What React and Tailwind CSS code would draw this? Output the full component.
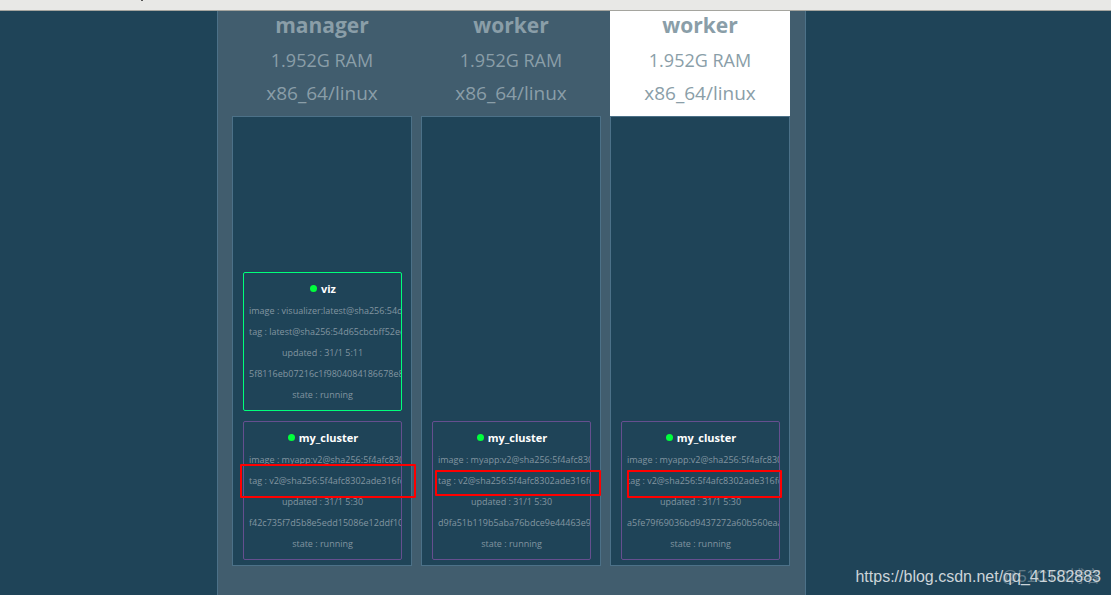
const NODES = [
  {
    id: "node-1",
    role: "manager",
    memory: "1.952G RAM",
    platform: "x86_64/linux",
    tasks: [
      {
        name: "viz",
        image: "visualizer:latest@sha256:54d65cbcbff52ee",
        tag: "latest@sha256:54d65cbcbff52ee7d789cd28",
        updated: "31/1 5:11",
        container: "5f8116eb07216c1f9804084186678e8b02c1f5",
        border: "border-[#00ff7b]",
      },
      {
        name: "my_cluster",
        image: "myapp:v2@sha256:5f4afc8302ade316fc",
        tag: "v2@sha256:5f4afc8302ade316fc47c99ee1d",
        updated: "31/1 5:30",
        container: "f42c735f7d5b8e5edd15086e12ddf10c5a7e2b",
        border: "border-[#654f8f]",
        mark: "-left-[3px] top-[43px] h-[34px] w-[176px]",
      },
    ],
  },
  {
    id: "node-2",
    role: "worker",
    memory: "1.952G RAM",
    platform: "x86_64/linux",
    tasks: [
      {
        name: "my_cluster",
        image: "myapp:v2@sha256:5f4afc8302ade316fc",
        tag: "v2@sha256:5f4afc8302ade316fc47c99ee1d",
        updated: "31/1 5:30",
        container: "d9fa51b119b5aba76bdce9e44463e9a1c07d4",
        border: "border-[#654f8f]",
        mark: "left-[3px] top-[49px] h-[26px] w-[166px]",
      },
    ],
  },
  {
    id: "node-3",
    role: "worker",
    memory: "1.952G RAM",
    platform: "x86_64/linux",
    active: true,
    tasks: [
      {
        name: "my_cluster",
        image: "myapp:v2@sha256:5f4afc8302ade316fc",
        tag: "v2@sha256:5f4afc8302ade316fc47c99ee1d",
        updated: "31/1 5:30",
        container: "a5fe79f69036bd9437272a60b560eaac41d8",
        border: "border-[#654f8f]",
        mark: "left-[6px] top-[49px] h-[28px] w-[155px]",
      },
    ],
  },
]

function TaskCard({ task }) {
  return (
    <li className="relative">
      <div
        className={`overflow-hidden rounded-xs border px-[5px] pt-1.5 pb-[5px] text-center text-[9px] leading-[21px] whitespace-nowrap text-[#8295a0] ${task.border}`}
      >
        <h3 className="flex items-center justify-center gap-1 pb-0.5 pl-px text-[11px] leading-[19px] font-bold text-white">
          <span className="size-[7px] rounded-full bg-[#00ff3c]" />
          {task.name}
        </h3>
        <p>image : {task.image}</p>
        <p>tag : {task.tag}</p>
        <p>updated : {task.updated}</p>
        <p>{task.container}</p>
        <p>state : running</p>
      </div>
      {/* Tag highlight, runs past the card edge */}
      {task.mark && (
        <div className={`absolute rounded-[1px] border-2 border-[#ff0000] ${task.mark}`} />
      )}
    </li>
  )
}

function NodeColumn({ node }) {
  return (
    <section className="w-[180px]">
      <header
        className={
          node.active
            ? "h-[105px] bg-white text-center text-[#8a9ea8]"
            : "h-[105px] text-center text-[#8a9ea8]"
        }
      >
        <h2 className="pb-1 text-[21px] leading-7 font-bold">{node.role}</h2>
        <p className="text-[18px] leading-[34px]">{node.memory}</p>
        <p className="text-[19px] leading-8">{node.platform}</p>
      </header>
      <ul className="flex min-h-[450px] flex-col justify-end gap-[10px] border border-[#4c7188] bg-[#1f4458] pt-[9px] pr-[9px] pb-[5px] pl-[10px]">
        {node.tasks.map((task) => (
          <TaskCard key={task.container} task={task} />
        ))}
      </ul>
    </section>
  )
}

export default function App() {
  return (
    <div className="relative flex min-h-screen flex-col bg-[#1f4458] font-['Open_Sans',sans-serif]">
      {/* Browser toolbar edge */}
      <div className="h-[11px] border-b border-[#a5a59f] bg-[#e8e8e6] pl-[141px]">
        <div className="h-px w-0.5 bg-[#555]" />
      </div>

      <main className="flex flex-1 pl-[217px]">
        <div className="flex gap-[9px] border-x border-[#4c7188] bg-[#415d6e] pr-[15px] pl-[14px]">
          {NODES.map((node) => (
            <NodeColumn key={node.id} node={node} />
          ))}
        </div>
      </main>

      {/* Watermarks */}
      <div className="absolute right-[10px] bottom-1.5 font-['Liberation_Sans','Noto_Sans_CJK_SC',sans-serif] text-[16px] leading-6 whitespace-nowrap">
        <span className="absolute right-0 text-white/30">@51CTO博客</span>
        <span className="relative text-[#ccd4d9]">https://blog.csdn.net/qq_41582883</span>
      </div>
    </div>
  )
}
